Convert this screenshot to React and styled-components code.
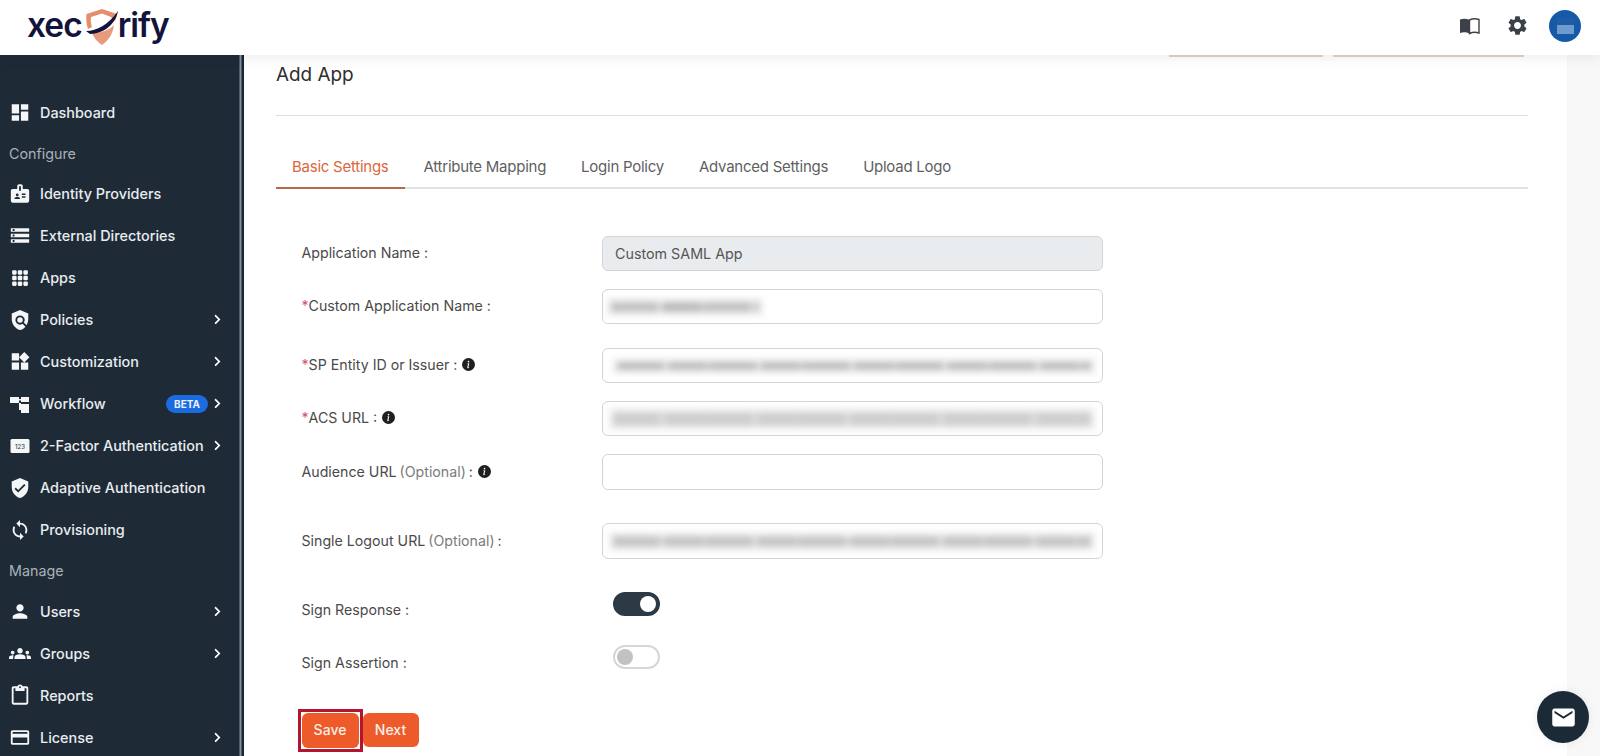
import React from "react";
import styled, { createGlobalStyle } from "styled-components";
import {
  MdDashboard, MdBadge, MdStorage, MdPolicy, MdWidgets, MdVerifiedUser, MdSync,
  MdPerson, MdGroups, MdContentPaste, MdCreditCard, MdSettings, MdEmail,
} from "react-icons/md";
import { BsGrid3X3GapFill, BsInfoCircleFill } from "react-icons/bs";
import { FaChevronRight } from "react-icons/fa";

const Global = createGlobalStyle`
  html, body { margin: 0; padding: 0; height: 100%; overflow: hidden; background: #fff; }
  * { box-sizing: border-box; }
  body { font-family: "Inter", "Liberation Sans", sans-serif; }
`;

const Page = styled.div`
  width: 1600px; height: 756px; overflow: hidden;
  display: flex; flex-direction: column; position: relative;
`;
const TopBar = styled.header`
  height: 55px; flex: none; background: #fff; position: relative; z-index: 2;
  display: flex; align-items: center; justify-content: space-between;
  padding: 0 19px 4px 27px;
  box-shadow: 0 3px 12px rgba(0,0,0,.07);
`;
const Logo = styled.div`
  display: flex; align-items: center; color: #14133b;
  font: 600 33.5px/1 "Inter", sans-serif; letter-spacing: -1px;
`;
const LogoShield = styled.svg`width: 34px; height: 38px; margin: 3px -1px 0 3px; flex: none;`;
const TopIcons = styled.div`display: flex; align-items: center; color: #3c4048;`;
const TopIcon = styled.span`
  width: 24px; height: 24px; display: flex; align-items: center; justify-content: center;
  margin-right: ${p => p.$mr}px;
`;
const Avatar = styled.div`
  width: 32px; height: 32px; border-radius: 50%; background: #165aa7;
  display: flex; align-items: center; justify-content: center;
`;
const AvatarBlur = styled.div`
  width: 17px; height: 16px; filter: blur(.6px);
  background: linear-gradient(#1d5da8 0 45%, #6f9ccf 45% 100%);
`;
const Body = styled.div`flex: 1; display: flex; min-height: 0;`;
const Sidebar = styled.nav`
  width: 244px; flex: none; background: #1e2b37; color: #e9edf0; padding-top: 36.5px;
  box-shadow: inset -2.5px 0 0 #1a2530, inset -4.5px 0 0 #7f90a4;
`;
const NavItem = styled.div`
  height: 42px; display: flex; align-items: center; padding: 0 21px 0 9px;
  font-size: 14.4px; font-weight: 500;
`;
const NavIcon = styled.span`
  width: 22px; height: 22px; margin-right: 9px; flex: none; color: #f4f6f7;
  display: flex; align-items: center; justify-content: center;
`;
const NavLabel = styled.span`flex: 1; white-space: nowrap;`;
const Section = styled.div`
  height: ${p => p.$h}px; display: flex; align-items: center; padding-left: 9px;
  color: #a9b1b7; font-size: 14.3px;
`;
const Beta = styled.span`
  width: 42px; height: 18px; border-radius: 9px; background: #1a6ce0; color: #eaf2ff;
  display: flex; align-items: center; justify-content: center;
  font-size: 10px; font-weight: 700; margin-right: 4px;
`;
const Chevron = styled(FaChevronRight)`width: 11px; height: 11px; color: #fff; flex: none;`;
const Main = styled.main`flex: 1; background: #f8f8f8; padding-right: 33px; min-width: 0;`;
const Panel = styled.section`height: 100%; background: #fff; padding: 0 39px 0 32px;`;
const Peek = styled.div`display: flex; justify-content: flex-end; gap: 10px; padding-right: 4px;`;
const PeekBtn = styled.div`width: ${p => p.$w}px; height: 2px; background: #e2d4c4;`;
const Title = styled.h1`
  margin: 0; height: 59px; padding-top: 7px; line-height: 22px;
  font-size: 18.9px; font-weight: 400; color: #2e2e2e;
  border-bottom: 1px solid #dedede;
`;
const Tabs = styled.div`
  margin-top: 30px; height: 43px; display: flex; border-bottom: 2px solid #e2e2e2;
`;
const Tab = styled.div`
  height: 43px; padding: 0 16px; margin-right: 3px; display: flex; align-items: center;
  font-size: 15px; white-space: nowrap; letter-spacing: -.25px;
  color: ${p => (p.$active ? "#d9683c" : "#5f5f5f")};
  border-bottom: 2px solid ${p => (p.$active ? "#b5694a" : "transparent")};
`;
const Form = styled.div`padding: 47px 0 0 25.5px;`;
const Row = styled.div`
  display: grid; grid-template-columns: 300.5px 501px; align-items: center;
  margin-top: ${p => p.$mt || 0}px;
`;
const SwitchRow = styled(Row)`align-items: start; height: 24px;`;
const Label = styled.label`
  font-size: 14.2px; color: #4a4a4a; display: flex; align-items: center; gap: 5px;
  white-space: nowrap; margin-bottom: 2px;
`;
const SwitchLabel = styled(Label)`margin-top: 9px;`;
const Req = styled.span`color: #d0506a; margin-right: -5px;`;
const Opt = styled.span`color: #7b7b7b; margin: 0 -2px;`;
const Info = styled(BsInfoCircleFill)`width: 13px; height: 13px; color: #1f1f1f;`;
const Field = styled.div`
  height: ${p => p.$h || 35}px; border: 1px solid #d4d4d4; border-radius: 6px; background: ${p => (p.$disabled ? "#e9ecef" : "#fff")};
  display: flex; align-items: center; padding-left: ${p => p.$pl || 12}px; overflow: hidden; position: relative;
  font-size: 14.3px; color: #555;
`;
const FieldMask = styled.div`
  position: absolute; left: 0; bottom: -1px; width: 293px; height: 3px; background: #fff;
`;
const Blurred = styled.div`
  width: ${p => p.$w}px; height: ${p => p.$h || 9}px; filter: blur(3.2px);
  box-shadow: 0 0 0 5px rgba(0,0,0,.045);
  background: repeating-linear-gradient(90deg, ${p => p.$c || "#c2c2c2"} 0 46px, #dadada 46px 52px, ${p => p.$c || "#bcbcbc"} 52px 90px, #d2d2d2 90px 93px);
`;
const Track = styled.div`
  width: 47px; height: 24px; border-radius: 12px; margin-left: 11px;
  background: ${p => (p.$on ? "#2c3a46" : "#fff")};
  border: 2px solid ${p => (p.$on ? "#2c3a46" : "#d6d6d6")};
  display: flex; align-items: center; padding: 0 2px;
  justify-content: ${p => (p.$on ? "flex-end" : "flex-start")};
`;
const Knob = styled.div`
  width: 16px; height: 16px; border-radius: 50%; background: ${p => (p.$on ? "#fff" : "#c2c2c2")};
`;
const Buttons = styled.div`display: flex; margin-top: 44px; align-items: flex-start;`;
const FocusRing = styled.div`
  margin: -4px 0 0 -4px; border: 3px solid #b4152e; padding: 1px; display: flex;
`;
const Btn = styled.button`
  height: ${p => p.$h}px; width: ${p => p.$w}px; border: 0; border-radius: 6px;
  background: #ec5b29; color: #fbeee8; font: 500 14px/1 "Inter", sans-serif; padding: 0 0 1px;
`;
const ChatBtn = styled.div`
  position: absolute; right: 11px; bottom: 13px; width: 52px; height: 52px; border-radius: 50%;
  background: #1c2a38; color: #fff; display: flex; align-items: center; justify-content: center; z-index: 3;
  box-shadow: 0 0 10px rgba(0,0,0,.08);
`;

const nav = [
  { t: "Dashboard", i: <MdDashboard size={23} /> },
  { section: "Configure", h: 39 },
  { t: "Identity Providers", i: <MdBadge size={23} /> },
  { t: "External Directories", i: <MdStorage size={23} /> },
  { t: "Apps", i: <BsGrid3X3GapFill size={18} /> },
  { t: "Policies", i: <MdPolicy size={22} />, c: 1 },
  { t: "Customization", i: <MdWidgets size={23} />, c: 1 },
  {
    t: "Workflow",
    i: (
      <svg width="20" height="20" viewBox="0 0 20 20" fill="currentColor">
        <path d="M0 3h9v6H0zM11 3h8v5h-8zM9 9h2v6H9zM11 10h8v9h-8z" />
        <path d="M9 5h2v1.500H9zM9 14h2v2H9z" />
      </svg>
    ),
    c: 1, beta: 1,
  },
  {
    t: "2-Factor Authentication",
    i: (
      <svg width="20" height="18" viewBox="0 0 20 18">
        <rect x="0.500" y="2" width="19" height="14" rx="1.500" fill="currentColor" />
        <text x="10" y="11.500" textAnchor="middle" fontSize="6" fill="#3b4652" fontFamily="Inter, sans-serif">123</text>
      </svg>
    ),
    c: 1,
  },
  { t: "Adaptive Authentication", i: <MdVerifiedUser size={22} /> },
  { t: "Provisioning", i: <MdSync size={24} /> },
  { section: "Manage", h: 40 },
  { t: "Users", i: <MdPerson size={25} />, c: 1 },
  { t: "Groups", i: <MdGroups size={25} />, c: 1 },
  { t: "Reports", i: <MdContentPaste size={23} /> },
  { t: "License", i: <MdCreditCard size={23} />, c: 1 },
];

const tabs = ["Basic Settings", "Attribute Mapping", "Login Policy", "Advanced Settings", "Upload Logo"];

export default function App() {
  return (
    <Page>
      <Global />
      <TopBar>
        <Logo>
          <span>xec</span>
          <LogoShield viewBox="0 0 34 38">
            <path d="M17 1 L32 6 C32 8 31 11 30 13 L26 9 L17 5.500 L6 9 C5.500 13 6 16 7 19 L3 21 C1 15 1 10 1.500 6 Z" fill="#e58d6c" />
            <path d="M7 25 C14 25 24 23 29 17 C28 26 23 33 17 37 C12 34 9 30 7 25 Z" fill="#e89a7c" />
            <path d="M1 23 C12 23 23 17 33 3 C31 14 22 25 5 26 Z" fill="#14133b" />
          </LogoShield>
          <span>rify</span>
        </Logo>
        <TopIcons>
          <TopIcon $mr={24}>
            <svg width="21" height="18" viewBox="0 0 21 18">
              <path d="M1 2.500 C4 1.500 7.500 1.500 10.500 3 V16.500 C7.500 15 4 15 1 16 Z" fill="#3c4048" />
              <path d="M10.500 3 C13.500 1.500 17 1.500 20 2.500 V16 C17 15 13.500 15 10.500 16.500 Z" fill="#fff" stroke="#3c4048" strokeWidth="1.400" />
            </svg>
          </TopIcon>
          <TopIcon $mr={20}><MdSettings size={23} /></TopIcon>
          <Avatar><AvatarBlur /></Avatar>
        </TopIcons>
      </TopBar>
      <Body>
        <Sidebar>
          {nav.map(n =>
            n.section ? (
              <Section key={n.section} $h={n.h}>{n.section}</Section>
            ) : (
              <NavItem key={n.t}>
                <NavIcon>{n.i}</NavIcon>
                <NavLabel>{n.t}</NavLabel>
                {n.beta && <Beta>BETA</Beta>}
                {n.c && <Chevron />}
              </NavItem>
            )
          )}
        </Sidebar>
        <Main>
          <Panel>
            <Peek><PeekBtn $w={154} /><PeekBtn $w={191} /></Peek>
            <Title>Add App</Title>
            <Tabs>
              {tabs.map((t, i) => <Tab key={t} $active={i === 0}>{t}</Tab>)}
            </Tabs>
            <Form>
              <Row>
                <Label>Application Name :</Label>
                <Field $disabled>Custom SAML App</Field>
              </Row>
              <Row $mt={18}>
                <Label><Req>*</Req>Custom Application Name :</Label>
                <Field $pl={8}><Blurred $w={148} $h={10} /><FieldMask /></Field>
              </Row>
              <Row $mt={24}>
                <Label><Req>*</Req>SP Entity ID or Issuer : <Info /></Label>
                <Field $pl={14}><Blurred $w={474} $h={8} $c="#bdbdbd" /></Field>
              </Row>
              <Row $mt={18}>
                <Label><Req>*</Req>ACS URL : <Info /></Label>
                <Field $pl={10}><Blurred $w={478} $h={14} $c="#cfcfcf" /></Field>
              </Row>
              <Row $mt={18}>
                <Label>Audience URL <Opt>(Optional)</Opt> : <Info /></Label>
                <Field $h={36} />
              </Row>
              <Row $mt={33}>
                <Label>Single Logout URL <Opt>(Optional)</Opt> :</Label>
                <Field $h={36} $pl={10}><Blurred $w={478} $h={11} $c="#c6c6c6" /></Field>
              </Row>
              <SwitchRow $mt={33}>
                <SwitchLabel>Sign Response :</SwitchLabel>
                <Track $on><Knob $on /></Track>
              </SwitchRow>
              <SwitchRow $mt={29}>
                <SwitchLabel>Sign Assertion :</SwitchLabel>
                <Track><Knob /></Track>
              </SwitchRow>
              <Buttons>
                <FocusRing><Btn $w={57} $h={35}>Save</Btn></FocusRing>
                <Btn $w={56} $h={34}>Next</Btn>
              </Buttons>
            </Form>
          </Panel>
        </Main>
      </Body>
      <ChatBtn><MdEmail size={27} /></ChatBtn>
    </Page>
  );
}
